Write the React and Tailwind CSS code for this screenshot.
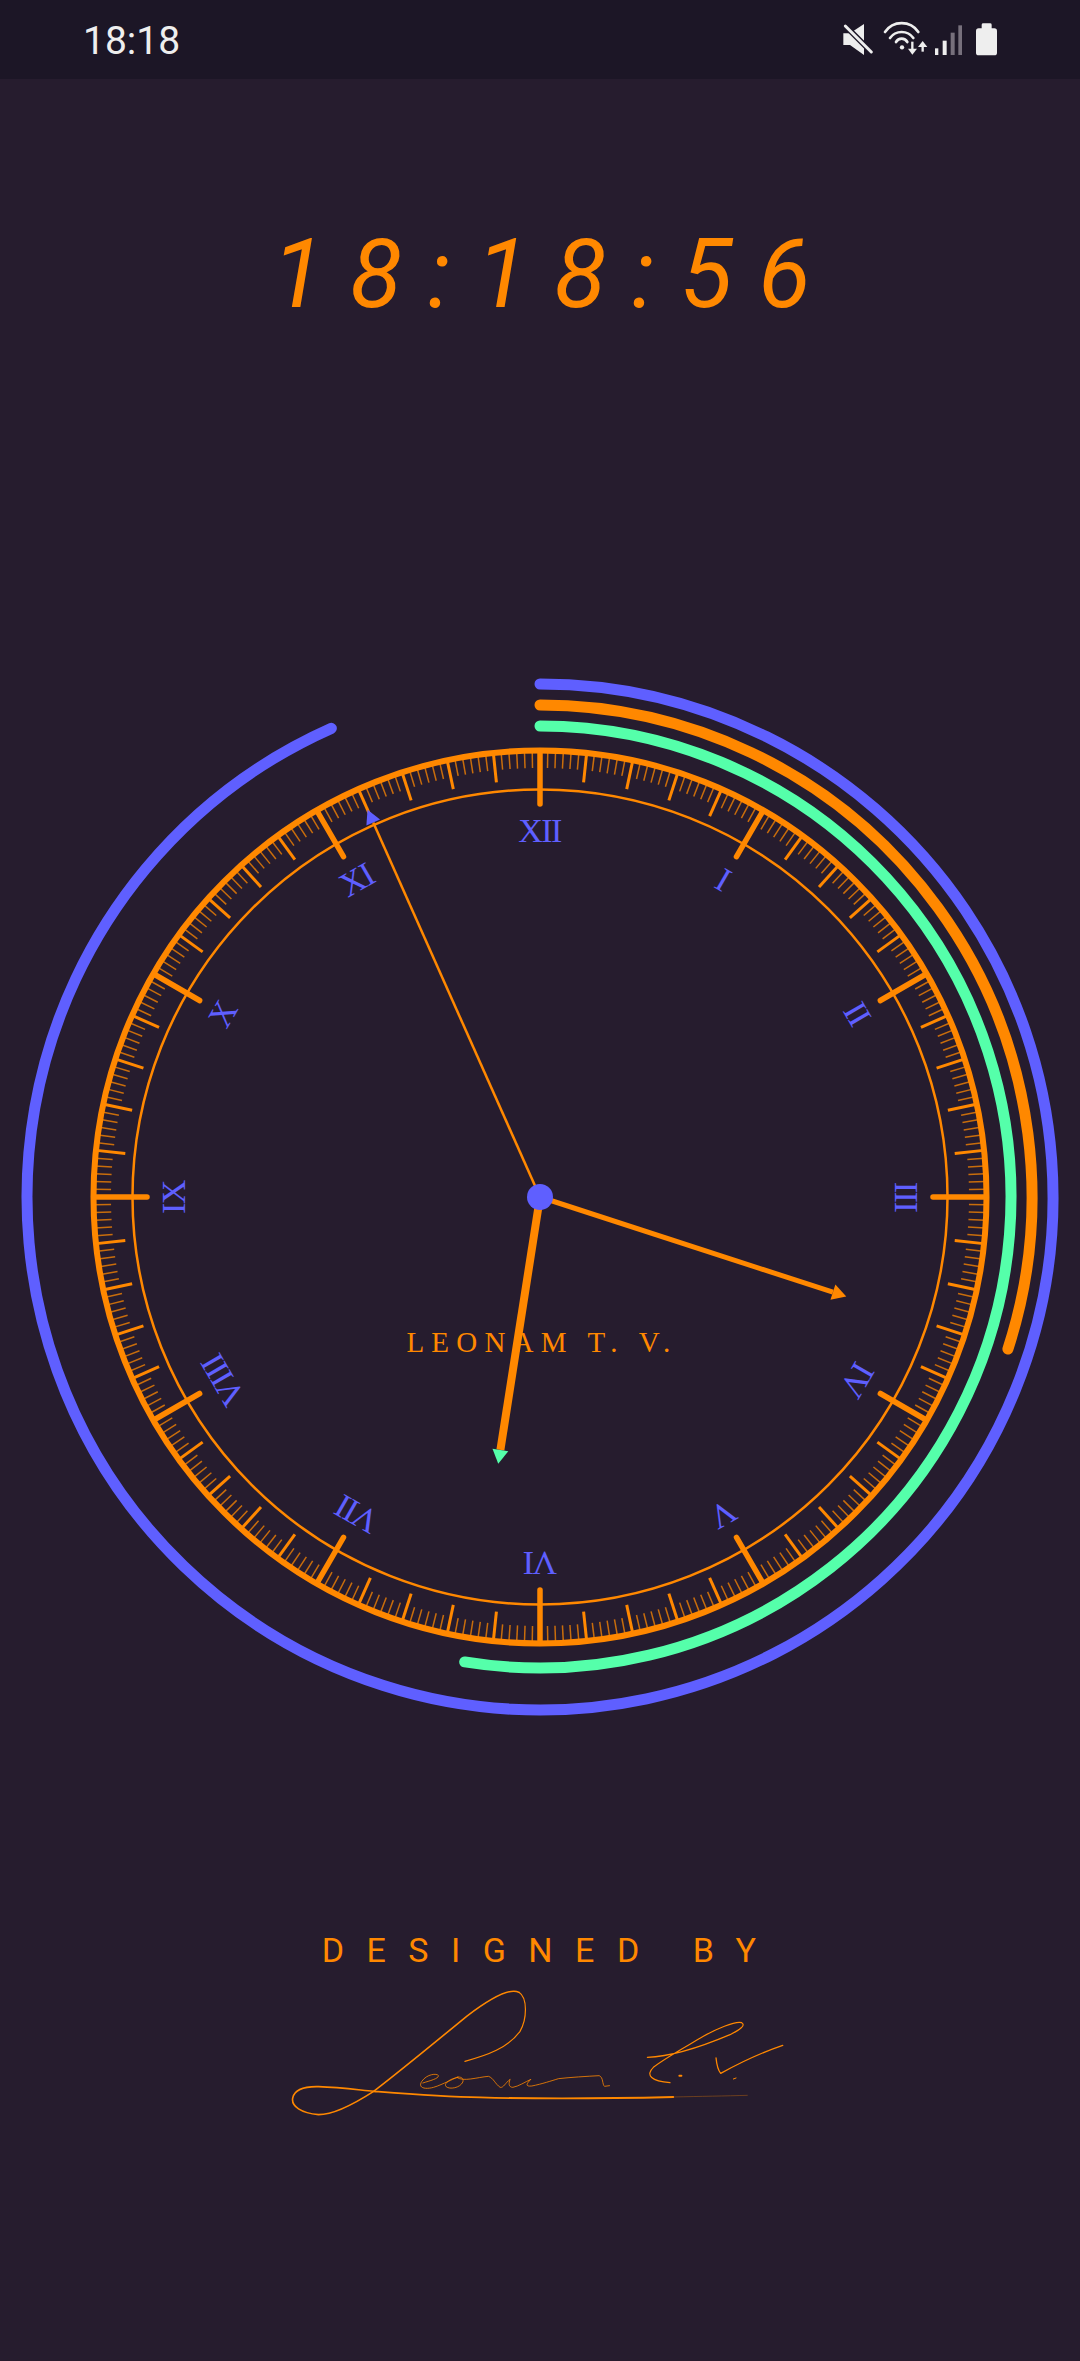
import React from 'react';

const ORANGE = '#ff8800';
const BLUE = '#5f5fff';
const GREEN = '#55ffaa';
const C = 540;

const polar = (r, deg) => {
  const a = (deg * Math.PI) / 180;
  return [C + r * Math.sin(a), C - r * Math.cos(a)];
};

const arcPath = (r, deg) => {
  const [x, y] = polar(r, deg);
  return `M ${C} ${C - r} A ${r} ${r} 0 ${deg > 180 ? 1 : 0} 1 ${x} ${y}`;
};

const NUMERALS = ['XII', 'I', 'II', 'III', 'IV', 'V', 'VI', 'VII', 'VIII', 'IX', 'X', 'XI'];

const Ticks = () => {
  const ticks = [];
  for (let i = 0; i < 360; i++) {
    const major = i % 30 === 0;
    const medium = i % 6 === 0;
    const inner = major ? 393 : medium ? 417 : 429;
    const [x1, y1] = polar(446, i);
    const [x2, y2] = polar(inner, i);
    ticks.push(
      <line
        key={i}
        x1={x1}
        y1={y1}
        x2={x2}
        y2={y2}
        stroke={ORANGE}
        strokeOpacity={major || medium ? 1 : 0.75}
        strokeWidth={major ? 5.5 : medium ? 3 : 1.5}
        strokeLinecap={major ? 'round' : 'butt'}
      />
    );
  }
  return <g>{ticks}</g>;
};

const Hand = ({ deg, len, width, tip, tipLen = 14, half = 8 }) => {
  const [x, y] = polar(len, deg);
  const a = ((deg + 90) * Math.PI) / 180;
  const dx = half * Math.sin(a);
  const dy = -half * Math.cos(a);
  const [tx, ty] = polar(len + tipLen, deg);
  return (
    <g>
      <line x1={C} y1={C} x2={x} y2={y} stroke={ORANGE} strokeWidth={width} />
      <polygon points={`${x + dx},${y + dy} ${x - dx},${y - dy} ${tx},${ty}`} fill={tip} />
    </g>
  );
};

const Clock = () => (
  <svg viewBox="0 0 1080 1080" className="block w-[1080px] h-[1080px]" fill="none">
    <path d={arcPath(513, 336)} stroke={BLUE} strokeWidth="11" strokeLinecap="round" />
    <path d={arcPath(492, 108)} stroke={ORANGE} strokeWidth="11" strokeLinecap="round" />
    <path d={arcPath(471, 189.2)} stroke={GREEN} strokeWidth="11" strokeLinecap="round" />

    <circle cx={C} cy={C} r="446.5" stroke={ORANGE} strokeWidth="6" />
    <circle cx={C} cy={C} r="407.5" stroke={ORANGE} strokeWidth="2.5" />
    <Ticks />

    {NUMERALS.map((n, i) => (
      <text
        key={n}
        x="539.5"
        y="185"
        textAnchor="middle"
        transform={`rotate(${i * 30} ${C} ${C})`}
        fill={BLUE}
        className="font-['Liberation_Serif',serif] text-[34px] tracking-[-1.5px]"
      >
        {n}
      </text>
    ))}

    <text
      x="542"
      y="695"
      textAnchor="middle"
      fill={ORANGE}
      className="font-['Liberation_Serif',serif] text-[29px] tracking-[7.2px]"
    >
      LEONAM T. V.
    </text>

    <Hand deg={336} len={410} width={2.5} tip={BLUE} half={7.5} />
    <Hand deg={108} len={308} width={5} tip={ORANGE} />
    <Hand deg={188.9} len={256} width={8} tip={GREEN} />
    <circle cx={C} cy={C} r="13" fill={BLUE} />
  </svg>
);

const StatusIcons = () => (
  <svg viewBox="120 60 480 114" className="block w-[160px] h-[38px]" fill="none">
    {/* muted speaker */}
    <path d="M130 100 H150 L192 72 V165 L150 135 H130 Z" fill="#eeeeee" />
    <path d="M128 70 L218 160" stroke="#1c1626" strokeWidth="17" />
    <path d="M136 78 L214 156" stroke="#eeeeee" strokeWidth="9" strokeLinecap="round" />
    {/* wifi */}
    <path d="M255 96 A60 60 0 0 1 355 96" stroke="#eeeeee" strokeWidth="8" strokeLinecap="round" />
    <path d="M270 114 A43 43 0 0 1 340 114" stroke="#eeeeee" strokeWidth="8" strokeLinecap="round" />
    <path d="M288 126 A19.5 19.5 0 0 1 322 126" stroke="#eeeeee" strokeWidth="8" strokeLinecap="round" />
    <circle cx="306" cy="142" r="6.5" fill="#eeeeee" />
    <path d="M337 125 V152" stroke="#eeeeee" strokeWidth="7" />
    <path d="M324 146 H351 L337 164 Z" fill="#eeeeee" />
    <path d="M368 136 V155" stroke="#eeeeee" strokeWidth="7" />
    <path d="M354 141 H382 L368 123 Z" fill="#eeeeee" />
    {/* signal */}
    <rect x="405" y="145" width="10" height="20" fill="#eeeeee" />
    <rect x="428" y="122" width="12" height="43" fill="#eeeeee" />
    <rect x="452" y="98" width="12" height="67" fill="#77707c" />
    <rect x="475" y="76" width="11" height="89" fill="#77707c" />
    {/* battery */}
    <path d="M545 85 V74 Q545 70 550 70 H570 Q575 70 575 74 V85 H583 Q591 85 591 93 V158 Q591 166 583 166 H536 Q528 166 528 158 V93 Q528 85 536 85 Z" fill="#eeeeee" />
  </svg>
);

// drawn in the zoomed coordinates of the signature, squeezed back by the viewBox
const Signature = () => (
  <svg viewBox="0 240 1568 480" preserveAspectRatio="none" className="block w-[540px] h-[160px]" fill="none">
    <g stroke={ORANGE} strokeLinecap="round" strokeLinejoin="round">
      <path d="M595 490 C660 472 720 450 755 400 C775 365 778 300 752 283" strokeWidth="1.2" vectorEffect="non-scaling-stroke" />
      <path d="M752 283 C725 268 670 300 600 355 C500 440 400 525 330 580 C270 620 215 650 170 650 C120 645 90 625 95 600 C100 575 130 565 170 566 C230 568 280 575 330 580" strokeWidth="1.6" vectorEffect="non-scaling-stroke" />
      <path d="M330 580 C450 590 530 597 640 598 C800 603 1000 602 1200 597" strokeWidth="1.8" vectorEffect="non-scaling-stroke" />
      <path d="M1200 597 C1280 595 1350 594 1415 592" strokeWidth="0.8" opacity="0.4" vectorEffect="non-scaling-stroke" />
      <g transform="translate(436 480) scale(0.968 1)">
        <path
          d="M38 75 C60 68 85 62 85 53 C80 45 50 48 35 70 C22 90 45 95 70 88 C85 84 100 76 115 70 C135 60 150 55 142 58 C115 64 100 78 108 86 C118 95 150 90 158 72 C162 60 150 55 140 58 C160 72 200 58 235 55 C250 60 255 78 270 88 C280 90 285 75 300 64 C295 75 295 88 308 88 C325 85 345 72 362 64 C348 78 345 86 365 84 C395 78 425 68 445 62 C480 58 530 55 567 53 C580 58 576 80 583 85 L598 83"
          strokeWidth="0.8"
          vectorEffect="non-scaling-stroke"
        />
      </g>
      <g transform="translate(1103.5 300) scale(0.968 1)">
        <path
          d="M22 178 C90 176 180 148 270 110 C300 95 318 82 305 74 C285 68 225 95 190 115 C140 145 75 180 40 208 C15 232 35 250 90 254"
          strokeWidth="1.2"
          vectorEffect="non-scaling-stroke"
        />
        <path
          d="M228 180 C230 200 235 218 242 226 C280 205 340 172 428 142"
          strokeWidth="1.3"
          vectorEffect="non-scaling-stroke"
        />
        <path d="M118 233 L124 233" strokeWidth="2" vectorEffect="non-scaling-stroke" />
        <path d="M280 243 L288 240" strokeWidth="1" vectorEffect="non-scaling-stroke" />
      </g>
    </g>
  </svg>
);

export default function App() {
  return (
    <div className="w-[1080px] h-[2361px] overflow-hidden bg-[#261c2e] font-['Roboto',sans-serif]">
      <div className="h-[79px] bg-[#1c1626] flex items-start justify-between pl-[83px] pr-[80px]">
        <span className="text-[39px] leading-[44px] mt-[19px] text-[#eeeeee]">18:18</span>
        <div className="mt-[20px]">
          <StatusIcons />
        </div>
      </div>

      <div className="h-[578px] pt-[139px] pl-[28px]">
        <div className="text-center text-[96px] leading-[112px] italic tracking-[25.5px] text-[#ff8800]">
          18:18:56
        </div>
      </div>

      <Clock />

      <div className="pt-[193px] pl-[20px] text-center text-[34px] leading-[40px] tracking-[22.5px] text-[#ff8800]">
        DESIGNED BY
      </div>
      <div className="mt-[8px] ml-[260px]">
        <Signature />
      </div>
    </div>
  );
}
